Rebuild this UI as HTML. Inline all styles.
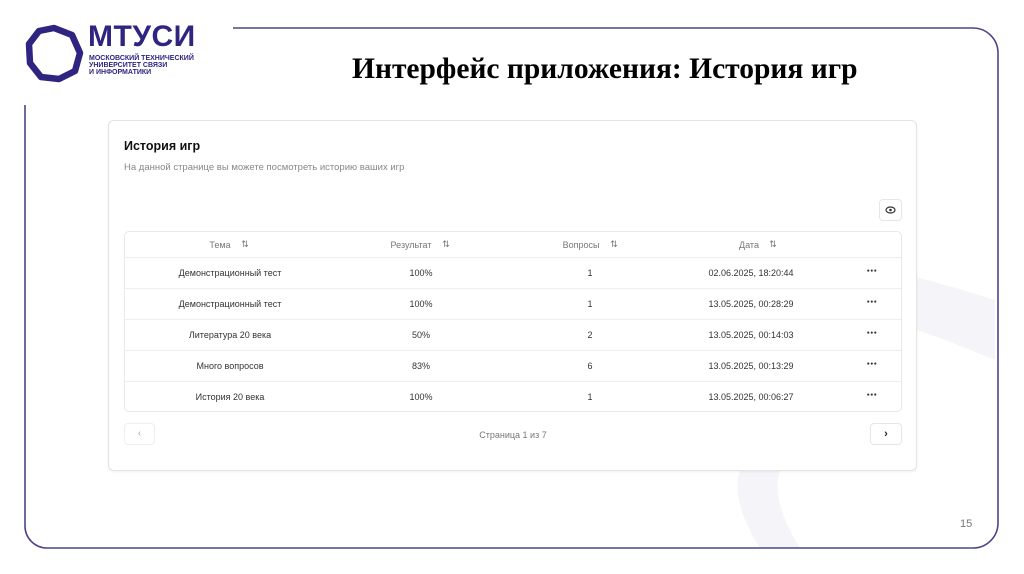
<!DOCTYPE html>
<html><head><meta charset="utf-8"><style>
*{margin:0;padding:0;box-sizing:border-box}
body{width:1024px;height:574px;background:#fff;position:relative;overflow:hidden;font-family:"Liberation Sans","DejaVu Sans",sans-serif}
.abs{position:absolute}
.t{position:absolute;font-size:9px;color:#333;transform:translateX(-50%);white-space:nowrap}
.h{color:#777}
.d{position:absolute;left:747px;top:10px;font-size:5px;letter-spacing:0.5px;color:#333;transform:translateX(-50%)}
.row{position:absolute;left:0;width:776px;border-top:1px solid #eeeeee}
</style></head><body>
<svg class="abs" style="left:0;top:0" width="1024" height="574">
<path d="M800 250 Q900 270 995 300 L995 360 Q900 320 790 290 Z" fill="#f4f4f9"/>
<path d="M740 470 Q730 500 760 548 L800 548 Q770 500 780 470 Z" fill="#f4f4f9"/>
<path d="M233 28 H973 A25 25 0 0 1 998 53 V523 A25 25 0 0 1 973 548 H47 A22 22 0 0 1 25 526 V105" fill="none" stroke="#4a4689" stroke-width="1.6"/>
<polygon points="54,28 72,35 80,53 75,71 59,79 41,77 30,63 29,44 39,31" fill="none" stroke="#2f2580" stroke-width="6.5" stroke-linejoin="round"/>
</svg>
<div class="abs" style="left:88px;top:21px;font-size:30px;font-weight:bold;color:#2f2580;letter-spacing:0.5px;line-height:32px">МТУСИ</div>
<div class="abs" style="left:89px;top:55px;font-size:7px;font-weight:bold;color:#2f2580;line-height:7px">МОСКОВСКИЙ ТЕХНИЧЕСКИЙ<br>УНИВЕРСИТЕТ СВЯЗИ<br>И ИНФОРМАТИКИ</div>
<div class="abs" style="left:352px;top:52px;font-family:'Liberation Serif',serif;font-weight:bold;font-size:29.5px;color:#000;line-height:34px;white-space:nowrap">Интерфейс приложения: История игр</div>
<div class="abs" style="left:960px;top:518px;font-size:11px;color:#777">15</div>

<div class="abs" style="left:108px;top:120px;width:809px;height:351px;border:1px solid #e4e4e4;border-radius:6px;background:#fff;box-shadow:0 1px 2px rgba(0,0,0,0.06)">
 <div class="abs" style="left:15px;top:18px;font-size:12.5px;font-weight:bold;color:#111">История игр</div>
 <div class="abs" style="left:15px;top:41px;font-size:9.5px;color:#888">На данной странице вы можете посмотреть историю ваших игр</div>
 <div class="abs" style="left:770px;top:78px;width:23px;height:22px;border:1px solid #e6e6e6;border-radius:4px">
  <svg width="21" height="20"><ellipse cx="10.5" cy="10" rx="4.5" ry="3" fill="none" stroke="#333" stroke-width="1.2"/><circle cx="10.5" cy="10" r="1.3" fill="#333"/></svg>
 </div>
 <div class="abs" style="left:15px;top:110px;width:778px;height:181px;border:1px solid #e8e8e8;border-radius:5px">
  <div class="t h" style="left:95px;top:8px">Тема</div><div class="t h" style="left:120px;top:7px">⇅</div>
  <div class="t h" style="left:286px;top:8px">Результат</div><div class="t h" style="left:321px;top:7px">⇅</div>
  <div class="t h" style="left:456px;top:8px">Вопросы</div><div class="t h" style="left:489px;top:7px">⇅</div>
  <div class="t h" style="left:624px;top:8px">Дата</div><div class="t h" style="left:648px;top:7px">⇅</div>
  <div class="row" style="top:25px;height:31px"><div class="t" style="left:105px;top:10px">Демонстрационный тест</div><div class="t" style="left:296px;top:10px">100%</div><div class="t" style="left:465px;top:10px">1</div><div class="t" style="left:626px;top:10px">02.06.2025, 18:20:44</div><div class="d">●●●</div></div>
  <div class="row" style="top:56px;height:31px"><div class="t" style="left:105px;top:10px">Демонстрационный тест</div><div class="t" style="left:296px;top:10px">100%</div><div class="t" style="left:465px;top:10px">1</div><div class="t" style="left:626px;top:10px">13.05.2025, 00:28:29</div><div class="d">●●●</div></div>
  <div class="row" style="top:87px;height:31px"><div class="t" style="left:105px;top:10px">Литература 20 века</div><div class="t" style="left:296px;top:10px">50%</div><div class="t" style="left:465px;top:10px">2</div><div class="t" style="left:626px;top:10px">13.05.2025, 00:14:03</div><div class="d">●●●</div></div>
  <div class="row" style="top:118px;height:31px"><div class="t" style="left:105px;top:10px">Много вопросов</div><div class="t" style="left:296px;top:10px">83%</div><div class="t" style="left:465px;top:10px">6</div><div class="t" style="left:626px;top:10px">13.05.2025, 00:13:29</div><div class="d">●●●</div></div>
  <div class="row" style="top:149px;height:31px"><div class="t" style="left:105px;top:10px">История 20 века</div><div class="t" style="left:296px;top:10px">100%</div><div class="t" style="left:465px;top:10px">1</div><div class="t" style="left:626px;top:10px">13.05.2025, 00:06:27</div><div class="d">●●●</div></div>
 </div>
 <div class="abs" style="left:15px;top:302px;width:31px;height:22px;border:1px solid #eee;border-radius:4px;font-size:10px;color:#aaa;text-align:center;line-height:20px">‹</div>
 <div class="t" style="left:404px;top:309px;color:#777">Страница 1 из 7</div>
 <div class="abs" style="left:761px;top:302px;width:32px;height:22px;border:1px solid #e6e6e6;border-radius:4px;font-size:11px;color:#222;text-align:center;line-height:20px;font-weight:bold">›</div>
</div>
</body></html>
